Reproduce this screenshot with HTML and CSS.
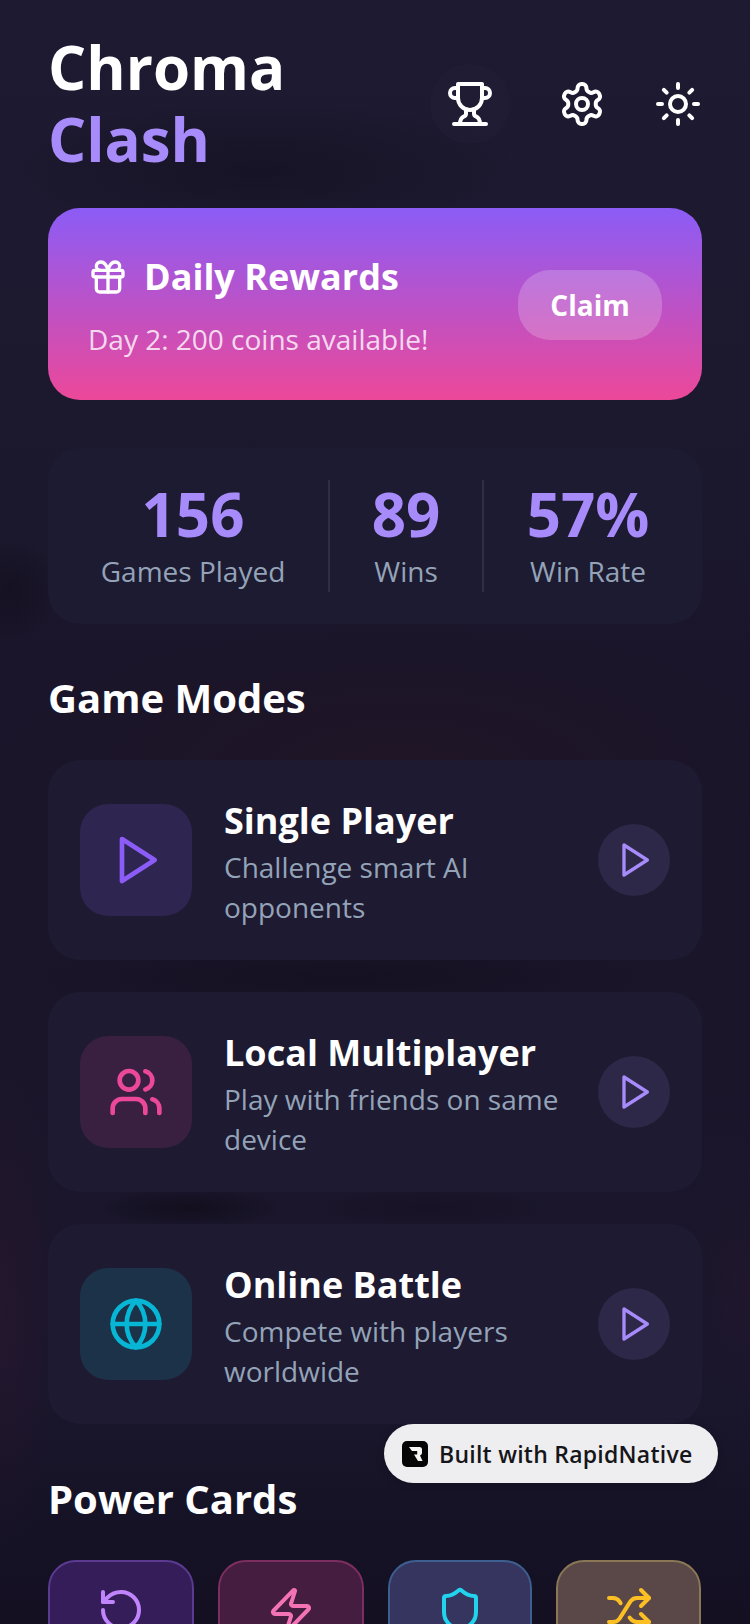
FILE: index.html
```html
<!DOCTYPE html>
<html lang="en">
<head>
<meta charset="utf-8">
<title>Chroma Clash</title>
<link rel="stylesheet" href="styles.css">
</head>
<body>
<svg width="0" height="0" class="defs">
  <symbol id="i-play" viewBox="0 0 24 24"><polygon points="6 3 20 12 6 21 6 3"/></symbol>
</svg>
<main class="screen">
  <header class="header">
    <h1 class="title">Chroma<span class="title-accent">Clash</span></h1>
    <div class="actions">
      <button class="icon-btn icon-btn-fill">
        <svg class="ico ico-48" viewBox="0 0 24 24"><path d="M6 9H4.5a2.5 2.5 0 0 1 0-5H6"/><path d="M18 9h1.5a2.5 2.5 0 0 0 0-5H18"/><path d="M4 22h16"/><path d="M10 14.66V17c0 .55-.47.98-.97 1.21C7.85 18.75 7 20.24 7 22"/><path d="M14 14.66V17c0 .55.47.98.97 1.21C16.15 18.75 17 20.24 17 22"/><path d="M18 2H6v7a6 6 0 0 0 12 0V2Z"/></svg>
      </button>
      <button class="icon-btn">
        <svg class="ico ico-48" viewBox="0 0 24 24"><path d="M12.22 2h-.44a2 2 0 0 0-2 2v.18a2 2 0 0 1-1 1.73l-.43.25a2 2 0 0 1-2 0l-.15-.08a2 2 0 0 0-2.73.73l-.22.38a2 2 0 0 0 .73 2.73l.15.1a2 2 0 0 1 1 1.72v.51a2 2 0 0 1-1 1.74l-.15.09a2 2 0 0 0-.73 2.73l.22.38a2 2 0 0 0 2.73.73l.15-.08a2 2 0 0 1 2 0l.43.25a2 2 0 0 1 1 1.73V20a2 2 0 0 0 2 2h.44a2 2 0 0 0 2-2v-.18a2 2 0 0 1 1-1.73l.43-.25a2 2 0 0 1 2 0l.15.08a2 2 0 0 0 2.73-.73l.22-.39a2 2 0 0 0-.73-2.73l-.15-.08a2 2 0 0 1-1-1.74v-.5a2 2 0 0 1 1-1.74l.15-.09a2 2 0 0 0 .73-2.73l-.22-.38a2 2 0 0 0-2.73-.73l-.15.08a2 2 0 0 1-2 0l-.43-.25a2 2 0 0 1-1-1.73V4a2 2 0 0 0-2-2z"/><circle cx="12" cy="12" r="3"/></svg>
      </button>
      <button class="icon-plain">
        <svg class="ico ico-48" viewBox="0 0 24 24"><circle cx="12" cy="12" r="4"/><path d="M12 2v2"/><path d="M12 20v2"/><path d="m4.93 4.93 1.41 1.41"/><path d="m17.66 17.66 1.41 1.41"/><path d="M2 12h2"/><path d="M20 12h2"/><path d="m6.34 17.66-1.41 1.41"/><path d="m19.07 4.93-1.41 1.41"/></svg>
      </button>
    </div>
  </header>

  <section class="reward">
    <div class="reward-text">
      <div class="reward-head">
        <svg class="ico ico-40" viewBox="0 0 24 24"><rect x="3" y="8" width="18" height="4" rx="1"/><path d="M12 8v13"/><path d="M19 12v7a2 2 0 0 1-2 2H7a2 2 0 0 1-2-2v-7"/><path d="M7.5 8a2.5 2.5 0 0 1 0-5A4.8 8 0 0 1 12 8a4.8 8 0 0 1 4.5-5 2.5 2.5 0 0 1 0 5"/></svg>
        <h2 class="reward-title">Daily Rewards</h2>
      </div>
      <p class="reward-sub">Day 2: 200 coins available!</p>
    </div>
    <button class="claim">Claim</button>
  </section>

  <section class="stats">
    <div class="stat stat-a"><div class="stat-num">156</div><div class="stat-label">Games Played</div></div>
    <div class="stat stat-b"><div class="stat-num">89</div><div class="stat-label">Wins</div></div>
    <div class="stat stat-c"><div class="stat-num">57%</div><div class="stat-label">Win Rate</div></div>
  </section>

  <h2 class="section-title section-modes">Game Modes</h2>
  <section class="modes">
    <article class="mode">
      <div class="mode-icon mode-icon-violet"><svg class="ico ico-56 stroke-violet" viewBox="0 0 24 24"><use href="#i-play"/></svg></div>
      <div class="mode-text"><h3 class="mode-title">Single Player</h3><p class="mode-desc">Challenge smart AI opponents</p></div>
      <div class="mode-go"><svg class="ico ico-40 stroke-lilac" viewBox="0 0 24 24"><use href="#i-play"/></svg></div>
    </article>
    <article class="mode">
      <div class="mode-icon mode-icon-pink"><svg class="ico ico-56 stroke-pink" viewBox="0 0 24 24"><path d="M16 21v-2a4 4 0 0 0-4-4H6a4 4 0 0 0-4 4v2"/><circle cx="9" cy="7" r="4"/><path d="M22 21v-2a4 4 0 0 0-3-3.87"/><path d="M16 3.13a4 4 0 0 1 0 7.75"/></svg></div>
      <div class="mode-text"><h3 class="mode-title">Local Multiplayer</h3><p class="mode-desc">Play with friends on same device</p></div>
      <div class="mode-go"><svg class="ico ico-40 stroke-lilac" viewBox="0 0 24 24"><use href="#i-play"/></svg></div>
    </article>
    <article class="mode">
      <div class="mode-icon mode-icon-cyan"><svg class="ico ico-56 stroke-cyan" viewBox="0 0 24 24"><circle cx="12" cy="12" r="10"/><path d="M12 2a14.5 14.5 0 0 0 0 20 14.5 14.5 0 0 0 0-20"/><path d="M2 12h20"/></svg></div>
      <div class="mode-text"><h3 class="mode-title">Online Battle</h3><p class="mode-desc">Compete with players worldwide</p></div>
      <div class="mode-go"><svg class="ico ico-40 stroke-lilac" viewBox="0 0 24 24"><use href="#i-play"/></svg></div>
    </article>
  </section>

  <h2 class="section-title section-power">Power Cards</h2>
  <section class="powers">
    <div class="power power-violet"><svg class="ico ico-48 stroke-p1" viewBox="0 0 24 24"><path d="M3 12a9 9 0 1 0 9-9 9.75 9.75 0 0 0-6.74 2.74L3 8"/><path d="M3 3v5h5"/></svg></div>
    <div class="power power-pink"><svg class="ico ico-48 stroke-p2" viewBox="0 0 24 24"><path d="M4 14a1 1 0 0 1-.78-1.63l9.9-10.2a.5.5 0 0 1 .86.46l-1.92 6.02A1 1 0 0 0 13 10h7a1 1 0 0 1 .78 1.63l-9.9 10.2a.5.5 0 0 1-.86-.46l1.92-6.02A1 1 0 0 0 11 14z"/></svg></div>
    <div class="power power-blue"><svg class="ico ico-48 stroke-p3" viewBox="0 0 24 24"><path d="M20 13c0 5-3.5 7.5-7.66 8.95a1 1 0 0 1-.67-.01C7.5 20.5 4 18 4 13V6a1 1 0 0 1 1-1c2 0 4.5-1.2 6.24-2.72a1.17 1.17 0 0 1 1.52 0C14.51 3.81 17 5 19 5a1 1 0 0 1 1 1z"/></svg></div>
    <div class="power power-amber"><svg class="ico ico-48 stroke-p4" viewBox="0 0 24 24"><path d="m18 14 4 4-4 4"/><path d="m18 2 4 4-4 4"/><path d="M2 18h1.973a4 4 0 0 0 3.3-1.7l5.454-8.6a4 4 0 0 1 3.3-1.7H22"/><path d="M2 6h1.972a4 4 0 0 1 3.34 1.8l.5.8"/><path d="M22 18h-6.041a4 4 0 0 1-3.3-1.8l-.359-.45"/></svg></div>
  </section>

  <a class="badge">
    <svg class="badge-logo" viewBox="0 0 26 26"><rect width="26" height="26" rx="5" fill="#050505"/><path class="badge-r" d="M7 6h10.5a2.5 2.5 0 0 1 2.5 2.5v3.5a2.5 2.5 0 0 1-2 2.4l2.6 5.6h-4.6l-4-6.5h3.2v-3.5H10z"/></svg>
    <span class="badge-text">Built with RapidNative</span>
  </a>
</main>
</body>
</html>
```

FILE: styles.css
```css
* { box-sizing: border-box; }
html, body { margin: 0; padding: 0; }
body {
  width: 750px;
  height: 1624px;
  overflow: hidden;
  font-family: "Open Sans", "Noto Sans", sans-serif;
  color: #fff;
  background-color: #1a162b;
}
.defs { position: absolute; }
.screen {
  position: relative;
  width: 750px;
  height: 1624px;
  overflow: hidden;
  padding: 30px 48px 0;
  background:
    radial-gradient(ellipse 90px 20px at 190px 1208px, rgba(8,6,14,.45), transparent 100%),
    radial-gradient(ellipse 120px 20px at 430px 1208px, rgba(14,10,24,.25), transparent 100%),
    radial-gradient(ellipse 60px 240px at 0 1310px, rgba(58,24,50,.3), transparent 100%),
    radial-gradient(ellipse 70px 110px at 750px 1290px, rgba(56,26,48,.2), transparent 100%),
    radial-gradient(ellipse 400px 150px at 400px 770px, rgba(34,20,34,.6), transparent 100%),
    radial-gradient(ellipse 50px 50px at 10px 590px, rgba(10,8,16,.35), transparent 100%),
    radial-gradient(ellipse 320px 40px at 340px 978px, rgba(12,10,22,.4), transparent 100%),
    radial-gradient(ellipse 260px 70px at 260px 170px, rgba(16,13,28,.5), transparent 100%),
    linear-gradient(180deg, #1d1a31 0%, #1c192f 25%, #1a152a 40%, #1a1529 60%, #1a162c 85%, #141022 100%);
}
.ico {
  display: block;
  flex: none;
  fill: none;
  stroke: currentColor;
  stroke-width: 2;
  stroke-linecap: round;
  stroke-linejoin: round;
}
.ico-40 { width: 40px; height: 40px; }
.ico-48 { width: 48px; height: 48px; }
.ico-56 { width: 56px; height: 56px; }
.stroke-violet { color: #8b5cf6; }
.stroke-lilac { color: #a78bfa; }
.stroke-pink { color: #ec4899; }
.stroke-cyan { color: #06b6d4; }
.stroke-p1 { color: #c084fc; }
.stroke-p2 { color: #f472b6; }
.stroke-p3 { color: #22d3ee; }
.stroke-p4 { color: #fbbf24; }

.header {
  display: flex;
  align-items: center;
  justify-content: space-between;
  height: 146px;
  margin-top: 2px;
}
.title {
  margin: -4px 0 0;
  font-size: 60px;
  line-height: 72px;
  font-weight: 700;
}
.title-accent { display: block; color: #a78bfa; }
.actions { display: flex; align-items: center; gap: 32px; margin-top: -2px; }
.icon-btn, .icon-plain {
  border: 0;
  padding: 0;
  background: none;
  color: #fff;
}
.icon-btn {
  width: 80px;
  height: 80px;
  border-radius: 50%;
  padding: 16px;
}
.icon-btn-fill { background: rgba(38,34,58,.3); }

.reward {
  display: flex;
  align-items: center;
  justify-content: space-between;
  height: 192px;
  margin-top: 30px;
  padding: 0 40px;
  border-radius: 32px;
  background: linear-gradient(180deg, #8b5cf6 0%, #ec4899 100%);
}
.reward-text { padding-top: 5px; }
.reward-head { display: flex; align-items: center; gap: 16px; }
.reward-title {
  margin: 0;
  font-size: 36px;
  line-height: 48px;
  font-weight: 700;
}
.reward-sub {
  margin: 17px 0 0;
  font-size: 28px;
  line-height: 42px;
  color: rgba(255,255,255,.8);
}
.claim {
  width: 144px;
  height: 70px;
  margin-top: 2px;
  border: 0;
  border-radius: 32px;
  background: rgba(255,255,255,.2);
  color: #fff;
  font: 700 28px/40px "Open Sans", sans-serif;
}

.stats {
  display: flex;
  height: 176px;
  margin-top: 48px;
  padding: 32px 10px;
  border-radius: 32px;
  background: rgba(30,27,50,.95);
}
.stat { text-align: center; }
.stat-a { width: 272px; border-right: 2px solid #302e46; }
.stat-b { width: 154px; border-right: 2px solid #302e46; }
.stat-c { flex: 1; }
.stat-num {
  font-size: 60px;
  line-height: 68px;
  font-weight: 700;
  color: #a78bfa;
}
.stat-label {
  margin-top: 3px;
  font-size: 28px;
  line-height: 40px;
  color: #94a3b8;
}

.section-title {
  margin: 0;
  font-size: 40px;
  line-height: 56px;
  font-weight: 700;
}
.section-modes { margin-top: 46px; }
.section-power { margin-top: 47px; }

.modes { display: flex; flex-direction: column; gap: 32px; margin-top: 34px; }
.mode {
  display: flex;
  align-items: center;
  gap: 32px;
  height: 200px;
  padding: 32px;
  border-radius: 32px;
  background: rgba(30,27,50,.97);
}
.mode-icon {
  display: flex;
  align-items: center;
  justify-content: center;
  flex: none;
  width: 112px;
  height: 112px;
  border-radius: 28px;
}
.mode-icon-violet { background: #2e2550; }
.mode-icon-pink { background: #3a2040; }
.mode-icon-cyan { background: #1c3248; }
.mode-text { flex: 1; min-width: 0; padding-top: 3px; }
.mode-title {
  margin: 0;
  font-size: 36px;
  line-height: 48px;
  font-weight: 700;
}
.mode-desc {
  margin: 2px 0 0;
  font-size: 28px;
  line-height: 40px;
  color: #94a3b8;
}
.mode-go {
  display: flex;
  align-items: center;
  justify-content: center;
  flex: none;
  width: 72px;
  height: 72px;
  border-radius: 50%;
  background: #2e2848;
}

.powers {
  display: grid;
  grid-template-columns: 146px 146px 144px 145px;
  gap: 24px;
  margin-top: 33px;
}
.power {
  display: flex;
  justify-content: center;
  height: 160px;
  padding-top: 24px;
  border: 2px solid;
  border-radius: 28px;
}
.power-violet { background: #351d5a; border-color: #5b3a91; }
.power-pink { background: #451d40; border-color: #7d2e60; }
.power-blue { background: #353560; border-color: #3c5f8f; }
.power-amber { background: #5a4848; border-color: #8a7755; }

.badge {
  position: absolute;
  left: 384px;
  top: 1424px;
  display: flex;
  align-items: center;
  gap: 11px;
  width: 334px;
  height: 59px;
  padding-left: 18px;
  border-radius: 30px;
  background: #eeeef0;
  box-shadow: 0 2px 8px rgba(0,0,0,.15);
}
.badge-logo { width: 26px; height: 26px; flex: none; }
.badge-r { fill: #f4f4f4; }
.badge-text {
  font-size: 23px;
  line-height: 32px;
  font-weight: 600;
  letter-spacing: .25px;
  color: #16161a;
}
```
